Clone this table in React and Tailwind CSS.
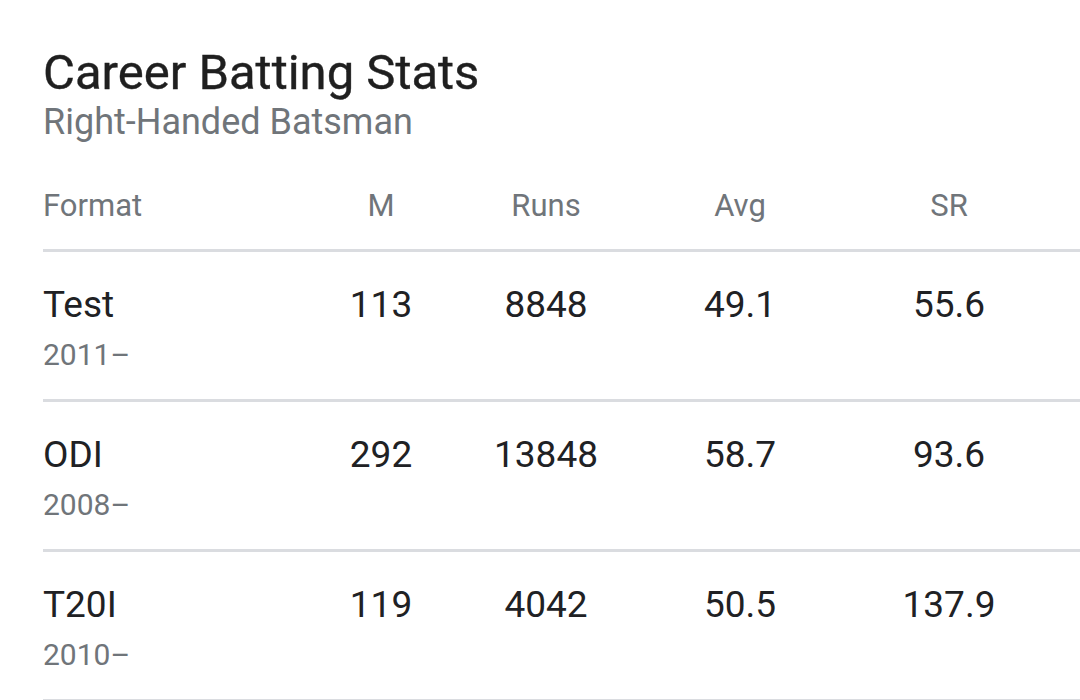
import React from 'react';

const rows = [
    { format: 'Test', years: '2011–', m: '113', runs: '8848', avg: '49.1', sr: '55.6' },
    { format: 'ODI', years: '2008–', m: '292', runs: '13848', avg: '58.7', sr: '93.6' },
    { format: 'T20I', years: '2010–', m: '119', runs: '4042', avg: '50.5', sr: '137.9' },
];

const cols = 'grid grid-cols-[267px_142px_188px_200px_218px]';

const App = () => {
    return (
        <div className="min-h-screen w-full bg-white pl-[43px] font-['Roboto','Liberation_Sans',sans-serif] overflow-hidden">
            {/* заголовок */}
            <div className="pt-[43px]">
                <h1 className="text-[49px] leading-[60px] text-[#1f1f1f] [-webkit-text-stroke:0.4px_#1f1f1f]">Career Batting Stats</h1>
                <p className="text-[36px] leading-[44px] text-[#70757a] -mt-[3px]">Right-Handed Batsman</p>
            </div>

            <div className={`${cols} mt-[44px] pb-[25px] border-b-[3px] border-[#dadce0] text-[31px] leading-[36px] text-[#70757a]`}>
                <div>Format</div>
                <div className="text-center">M</div>
                <div className="text-center">Runs</div>
                <div className="text-center">Avg</div>
                <div className="text-center">SR</div>
            </div>

            {rows.map((r) => (
                <div key={r.format} className={`${cols} h-[150px] pt-[31px] border-b-[3px] border-[#dadce0] text-[#202124]`}>
                    <div>
                        <div className="text-[37px] leading-[44px]">{r.format}</div>
                        <div className="mt-[10px] text-[30px] leading-[36px] text-[#70757a]">{r.years}</div>
                    </div>
                    <div className="text-center text-[37px] leading-[44px]">{r.m}</div>
                    <div className="text-center text-[37px] leading-[44px]">{r.runs}</div>
                    <div className="text-center text-[37px] leading-[44px]">{r.avg}</div>
                    <div className="text-center text-[37px] leading-[44px]">{r.sr}</div>
                </div>
            ))}
        </div>
    );
};

export default App;
